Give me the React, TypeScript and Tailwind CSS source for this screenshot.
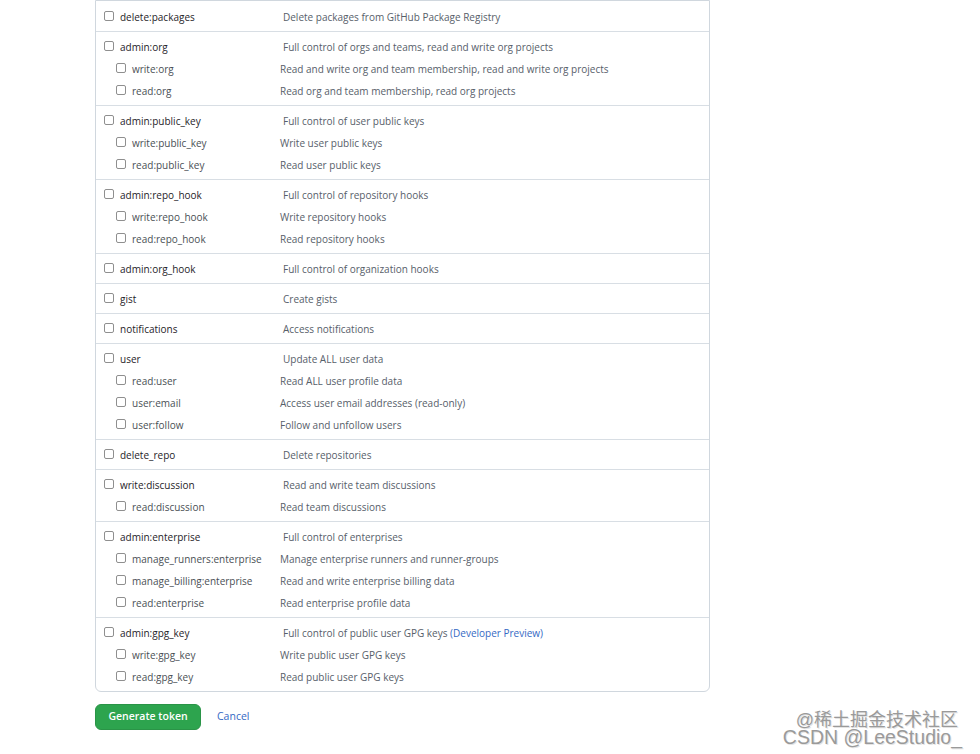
import React from "react";

type Scope = { name: string; desc: React.ReactNode };
type Group = { main: Scope; subs?: Scope[] };

const groups: Group[] = [
  { main: { name: "delete:packages", desc: "Delete packages from GitHub Package Registry" } },
  {
    main: { name: "admin:org", desc: "Full control of orgs and teams, read and write org projects" },
    subs: [
      { name: "write:org", desc: "Read and write org and team membership, read and write org projects" },
      { name: "read:org", desc: "Read org and team membership, read org projects" },
    ],
  },
  {
    main: { name: "admin:public_key", desc: "Full control of user public keys" },
    subs: [
      { name: "write:public_key", desc: "Write user public keys" },
      { name: "read:public_key", desc: "Read user public keys" },
    ],
  },
  {
    main: { name: "admin:repo_hook", desc: "Full control of repository hooks" },
    subs: [
      { name: "write:repo_hook", desc: "Write repository hooks" },
      { name: "read:repo_hook", desc: "Read repository hooks" },
    ],
  },
  { main: { name: "admin:org_hook", desc: "Full control of organization hooks" } },
  { main: { name: "gist", desc: "Create gists" } },
  { main: { name: "notifications", desc: "Access notifications" } },
  {
    main: { name: "user", desc: "Update ALL user data" },
    subs: [
      { name: "read:user", desc: "Read ALL user profile data" },
      { name: "user:email", desc: "Access user email addresses (read-only)" },
      { name: "user:follow", desc: "Follow and unfollow users" },
    ],
  },
  { main: { name: "delete_repo", desc: "Delete repositories" } },
  {
    main: { name: "write:discussion", desc: "Read and write team discussions" },
    subs: [{ name: "read:discussion", desc: "Read team discussions" }],
  },
  {
    main: { name: "admin:enterprise", desc: "Full control of enterprises" },
    subs: [
      { name: "manage_runners:enterprise", desc: "Manage enterprise runners and runner-groups" },
      { name: "manage_billing:enterprise", desc: "Read and write enterprise billing data" },
      { name: "read:enterprise", desc: "Read enterprise profile data" },
    ],
  },
  {
    main: {
      name: "admin:gpg_key",
      desc: (
        <>
          Full control of public user GPG keys{" "}
          <span className="text-[#3569c4]">(Developer Preview)</span>
        </>
      ),
    },
    subs: [
      { name: "write:gpg_key", desc: "Write public user GPG keys" },
      { name: "read:gpg_key", desc: "Read public user GPG keys" },
    ],
  },
];

const Checkbox = () => (
  <span className="inline-block w-[10px] h-[10px] shrink-0 rounded-[2px] border border-[#8f8f8f] bg-white mt-[-3px]" />
);

const ScopeGroup: React.FC<{ group: Group }> = ({ group }) => (
  <div className="pt-[4px] first:pt-[5px] pb-[3px] border-b border-[#d8dee4] last:border-b-0">
    <div className="flex items-center h-[22px] pl-[8px]">
      <div className="flex items-center gap-[6px] w-[179px]">
        <Checkbox />
        <span className="text-[#1f2328] font-medium">{group.main.name}</span>
      </div>
      <span className="text-[#57606a]">{group.main.desc}</span>
    </div>
    {group.subs?.map((s) => (
      <div key={s.name} className="flex items-center h-[22px] pl-[20px]">
        <div className="flex items-center gap-[6px] w-[164px]">
          <Checkbox />
          <span className="text-[#4a4f55]">{s.name}</span>
        </div>
        <span className="text-[#57606a]">{s.desc}</span>
      </div>
    ))}
  </div>
);

export default function App() {
  return (
    <div
      className="relative w-[980px] h-[754px] bg-white overflow-hidden text-[10px]"
      style={{ fontFamily: '"Open Sans", "Noto Sans", sans-serif' }}
    >
      <div className="ml-[95px] w-[615px] border border-[#d0d7de] rounded-b-[6px]">
        {groups.map((g) => (
          <ScopeGroup key={g.main.name} group={g} />
        ))}
      </div>
      <div className="ml-[95px] mt-[12px] flex items-center gap-[16px]">
        <button className="h-[26px] w-[106px] rounded-[6px] bg-[#2da44e] border border-[#2a9447] text-white font-semibold text-[10.5px]">
          Generate token
        </button>
        <span className="text-[#3569c4] text-[10.5px]">Cancel</span>
      </div>
      <div
        className="absolute right-[18px] bottom-[8px] flex flex-col items-end text-[#9a9a9a]"
        style={{
          fontFamily: '"Liberation Sans", "Noto Sans CJK SC", sans-serif',
          textShadow: "1px 1px 0 #e4e4e4",
        }}
      >
        <span className="mr-[4px] text-[18px] leading-[16px]">@稀土掘金技术社区</span>
        <span className="text-[19.5px] leading-[18px]">CSDN @LeeStudio_</span>
      </div>
    </div>
  );
}
